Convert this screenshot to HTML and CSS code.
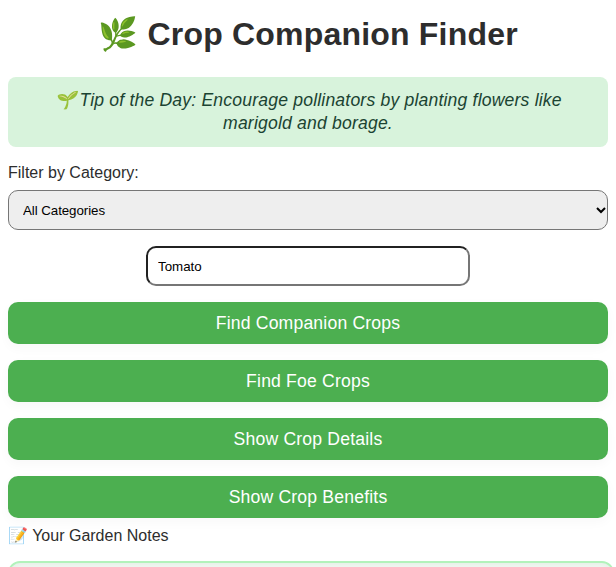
FILE: index.html
```html
<!DOCTYPE html>
<html lang="en">
<head>
<meta charset="utf-8">
<title>Crop Companion Finder</title>
<link rel="stylesheet" href="styles.css">
</head>
<body>
<h1>🌿 Crop Companion Finder</h1>
<div class="tip"><span class="tip-icon">🌱</span>Tip of the Day: Encourage pollinators by planting flowers like marigold and borage.</div>
<label class="filter-label" for="category">Filter by Category:</label>
<div class="select-wrap">
  <select id="category" class="category"><option>All Categories</option></select>
  <svg class="chevron" width="10" height="8" viewBox="0 0 10 8"><path d="M1 2l4 4 4-4" fill="none" stroke="#000" stroke-width="2"/></svg>
</div>
<input class="crop-input" type="text" value="Tomato">
<button class="action">Find Companion Crops</button>
<button class="action">Find Foe Crops</button>
<button class="action">Show Crop Details</button>
<button class="action">Show Crop Benefits</button>
<label class="notes-label" for="notes">📝 Your Garden Notes</label>
<textarea id="notes" class="notes"></textarea>
</body>
</html>
```
FILE: styles.css
```css
html {
  height: 100%;
  overflow: hidden;
}
body {
  display: flow-root;
  box-sizing: border-box;
  height: 567px;
  overflow: hidden;
  margin: 0;
  padding: 0 8px;
  font-family: "Liberation Sans", Arial, sans-serif;
  font-size: 16px;
  line-height: 18px;
  color: #2d2d2d;
  background: #fff;
}
h1 {
  margin: 0;
  padding-top: 15px;
  height: 62px;
  line-height: 38px;
  font-size: 32px;
  letter-spacing: 0.2px;
  text-align: center;
}
.tip {
  box-sizing: border-box;
  height: 70px;
  padding: 12px 16px;
  border-radius: 8px;
  background: #d8f3dc;
  color: #1b4332;
  font-size: 17.6px;
  font-style: italic;
  letter-spacing: 0.18px;
  line-height: 23px;
  text-align: center;
}
.tip-icon {
  margin-right: 3px;
}
.filter-label {
  display: block;
  margin: 17px 0 8px;
}
.select-wrap {
  position: relative;
}
.category {
  appearance: none;
  display: block;
  box-sizing: border-box;
  width: 100%;
  height: 40px;
  padding: 10px 14px;
  border: 1px solid #767676;
  border-radius: 10px;
  background-color: #eee;
  color: #000;
  letter-spacing: -0.07px;
}
.chevron {
  position: absolute;
  top: 16px;
  right: 2px;
  pointer-events: none;
}
.crop-input {
  display: block;
  box-sizing: border-box;
  width: 324px;
  height: 40px;
  margin: 16px auto;
  padding: 10px;
  border-radius: 10px;
}
.action {
  display: block;
  width: 100%;
  height: 42px;
  margin: 0 0 16px;
  border: 0;
  border-radius: 10px;
  background: #4caf50;
  color: #fff;
  font-family: inherit;
  font-size: 17.6px;
  letter-spacing: 0.18px;
  box-shadow: 0 4px 12px rgba(0, 0, 0, 0.03);
}
.notes-label {
  display: block;
  margin: -7px 0 16px;
}
.notes {
  display: block;
  box-sizing: border-box;
  width: 606px;
  height: 100px;
  border: 2px solid #b2f2bb;
  border-radius: 12px;
  background: #f1faf3;
  box-shadow: inset 0 2px 6px rgba(0, 0, 0, 0.05);
}
```
